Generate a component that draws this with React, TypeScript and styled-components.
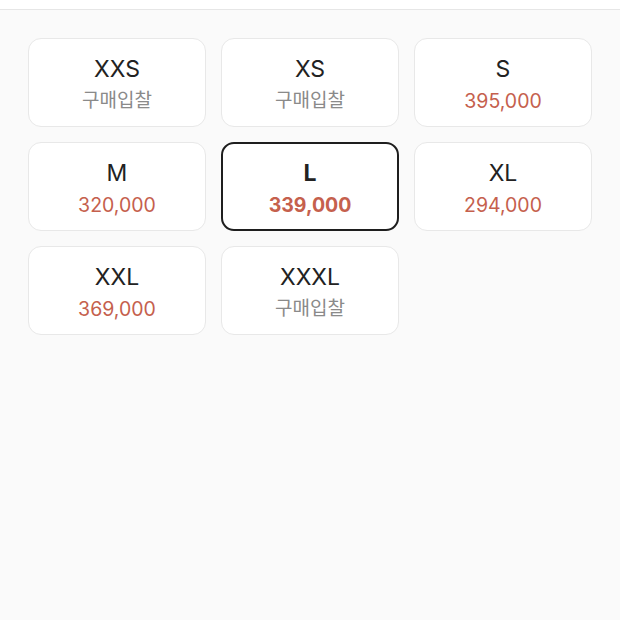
import styled, { createGlobalStyle } from 'styled-components';

const GlobalStyle = createGlobalStyle`
  html, body {
    margin: 0;
    padding: 0;
    background: #fafafa;
    font-family: Inter, 'Noto Sans CJK KR', sans-serif;
  }
`;

interface SizeItem {
  size: string;
  price?: string;
}

const sizes: SizeItem[] = [
  { size: 'XXS' },
  { size: 'XS' },
  { size: 'S', price: '395,000' },
  { size: 'M', price: '320,000' },
  { size: 'L', price: '339,000' },
  { size: 'XL', price: '294,000' },
  { size: 'XXL', price: '369,000' },
  { size: 'XXXL' },
];

export default function App() {
  const selected = 'L';

  return (
    <Page>
      <GlobalStyle />
      <TopBar />
      <Grid>
        {sizes.map((item) => {
          const active = item.size === selected;
          return (
            <SizeCard key={item.size} $active={active}>
              <SizeLabel $active={active}>{item.size}</SizeLabel>
              {item.price ? (
                <Price $active={active}>{item.price}</Price>
              ) : (
                <Bid>구매입찰</Bid>
              )}
            </SizeCard>
          );
        })}
      </Grid>
    </Page>
  );
}

const Page = styled.div`
  width: 620px;
  min-height: 620px;
  background: #fafafa;
`;

const TopBar = styled.div`
  height: 9px;
  background: #fff;
  border-bottom: 1px solid #e6e6e6;
`;

const Grid = styled.div`
  display: grid;
  grid-template-columns: repeat(3, 178px);
  gap: 15px;
  padding: 28px 28px 0;
`;

const SizeCard = styled.div<{ $active: boolean }>`
  box-sizing: border-box;
  height: 89px;
  padding-top: 4px;
  border-radius: 13px;
  background: #fff;
  border: ${({ $active }) => ($active ? '2px solid #1e1e1e' : '1px solid #e8e8e8')};
  display: flex;
  flex-direction: column;
  align-items: center;
  justify-content: center;
  gap: 7px;
`;

const SizeLabel = styled.div<{ $active: boolean }>`
  font-size: 23px;
  line-height: 26px;
  color: #222;
  font-weight: ${({ $active }) => ($active ? 700 : 400)};
`;

const Price = styled.div<{ $active: boolean }>`
  font-size: 19.5px;
  line-height: 24px;
  color: #c5604d;
  font-weight: ${({ $active }) => ($active ? 700 : 400)};
`;

const Bid = styled.div`
  font-size: 19px;
  line-height: 24px;
  color: #8a8a8a;
`;
